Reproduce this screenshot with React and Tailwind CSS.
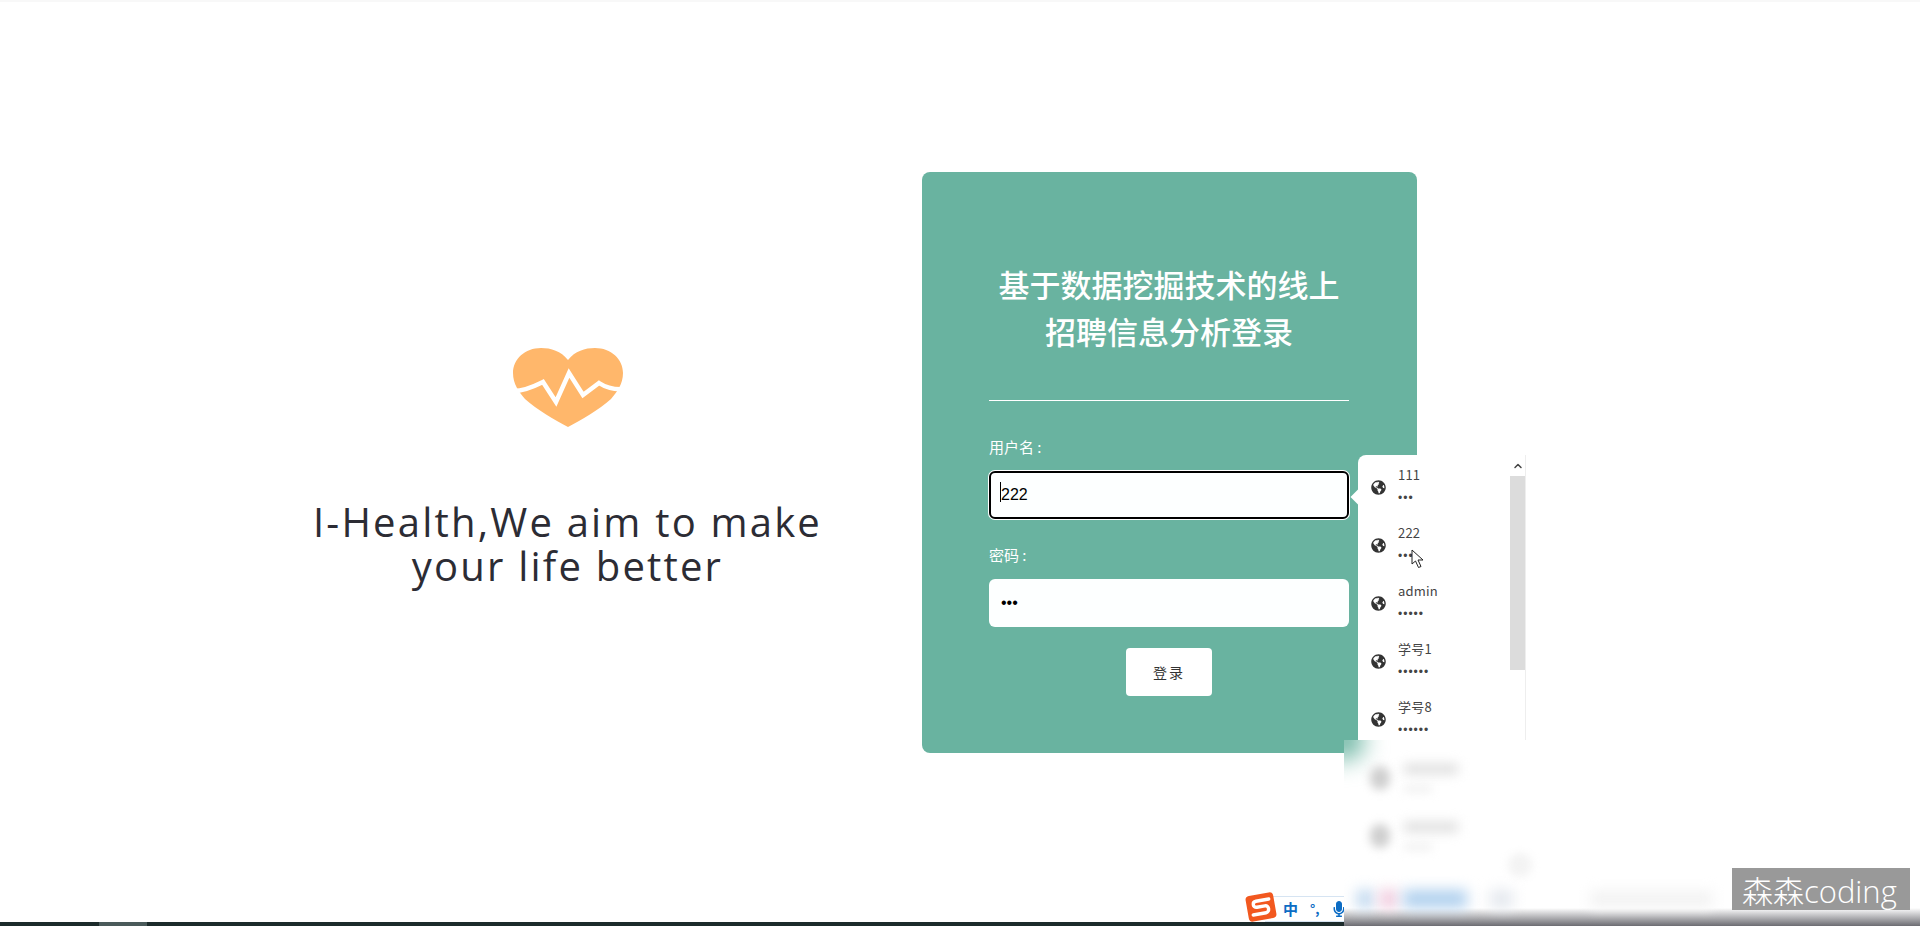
import { FaGlobeAmericas, FaMicrophone } from "react-icons/fa";
import { ChevronUp } from "lucide-react";

const saved = [
  { name: "111", dots: "•••" },
  { name: "222", dots: "•••" },
  { name: "admin", dots: "•••••" },
  { name: "学号1", dots: "••••••" },
  { name: "学号8", dots: "••••••" },
];

function Heart() {
  return (
    <svg width="110" height="79" viewBox="0 0 110 79" className="block">
      <path
        d="M55 12C48 3 38 0 28 0C12 0 0 11 0 25C0 36 6 44 12 51C24 62 42 72 55 79C68 72 86 62 98 51C104 44 110 36 110 25C110 11 98 0 82 0C72 0 62 3 55 12Z"
        fill="#ffb76b"
      />
      <path
        d="M-2 43C8 44 18 40 30 34L43 54L56 25L70 47L86 35C92 39 100 42 112 41"
        fill="none"
        stroke="#fff"
        strokeWidth="4.5"
      />
    </svg>
  );
}

function SogouLogo() {
  return (
    <svg width="34" height="32" viewBox="0 0 34 32">
      <g transform="rotate(-10 17 16)">
        <rect x="3" y="3" width="28" height="26" rx="4" fill="#f2581f" />
        <path
          d="M26 9.5H13C9 9.5 8.5 15.5 13 15.5H21C25.5 15.5 25 22.5 21 22.5H8"
          fill="none"
          stroke="#fff"
          strokeWidth="3.4"
          strokeLinecap="round"
        />
      </g>
    </svg>
  );
}

// the two rows the recording blurred out
function BlurredRow() {
  return (
    <div className="h-[58px] flex items-center gap-[14px] pl-[26px]">
      <div className="w-5 h-6 rounded-full bg-[#cfcfcf] blur-[5px]" />
      <div className="flex flex-col gap-3">
        <div className="w-[54px] h-2.5 bg-[#dddddd] blur-[6px]" />
        <div className="w-7 h-1.5 bg-[#eeeeee] blur-[5px]" />
      </div>
    </div>
  );
}

export default function App() {
  return (
    <div className="relative h-[926px] overflow-hidden bg-white border-t-2 border-[#f8f8f8] font-['Noto_Sans_CJK_SC',sans-serif]">
      {/* Page */}
      <div className="flex items-start pl-[315px] pt-[170px]">
        <div className="w-[505px] pt-[176px] flex flex-col items-center">
          <Heart />
          <p className="mt-[73px] text-center text-[40px] leading-[44px] tracking-[2.2px] text-[#2c2c34] font-['Open_Sans',sans-serif] whitespace-nowrap">
            I-Health,We aim to make
            <br />
            your life better
          </p>
        </div>

        <div className="ml-[102px] w-[495px] h-[581px] rounded-lg bg-[#69b3a0] pl-[67px] pr-[68px] pt-[88px]">
          <h1 className="text-center text-[31px] leading-[47px] font-medium text-white">
            基于数据挖掘技术的线上
            <br />
            招聘信息分析登录
          </h1>
          <div className="mt-[46px] h-px bg-white" />

          <label className="mt-9 block text-[15px] leading-5 text-white">用户名 :</label>
          <input
            defaultValue="222"
            className="mt-3.5 block w-full h-12 rounded-md bg-[#fdffff] px-[10px] text-base text-black font-['Liberation_Sans',sans-serif] border-2 border-black outline-none ring-1 ring-white"
          />

          <label className="mt-[26px] block text-[15px] leading-5 text-white">密码 :</label>
          <input
            type="password"
            defaultValue="123"
            className="mt-3.5 block w-full h-12 rounded-md bg-[#fdffff] px-3 text-base text-black font-['Liberation_Sans',sans-serif] outline-none"
          />

          <div className="mt-[21px] flex justify-center">
            <button className="w-[86px] h-12 rounded bg-white text-sm tracking-[2px] text-[#333]">登录</button>
          </div>
        </div>
      </div>

      {/* Saved password popup */}
      <div className="absolute left-[1358px] top-[453px] w-[168px] h-[285px] rounded-tl-lg bg-white flex">
        <span className="absolute -left-[5px] top-[36px] w-3 h-3 rotate-45 bg-white" />
        <span className="absolute left-[-358px] top-[27px] h-5 w-px bg-black" />
        <div className="flex-1 pt-[3px]">
          {saved.map((item) => (
            <div key={item.name} className="h-[58px] flex items-center gap-3 pl-[13px]">
              <FaGlobeAmericas className="w-[15px] h-[15px] text-[#333]" />
              <div className="text-[13px] text-[#444]">
                <div className="leading-[22px] tracking-[0.2px]">{item.name}</div>
                <div className="leading-[24px] text-[12px] tracking-[1px] font-['Liberation_Sans',sans-serif]">{item.dots}</div>
              </div>
            </div>
          ))}
        </div>
        <div className="w-4 flex flex-col items-center border-r border-[#eeeeee]">
          <ChevronUp className="mt-[5px] w-3 h-3 text-[#444]" strokeWidth={3} />
          <div className="mt-1 w-full h-[194px] bg-[#dcdcdc]" />
        </div>
      </div>

      {/* Cursor */}
      <svg width="14" height="20" viewBox="0 0 14 20" className="absolute left-[1411px] top-[547px]">
        <path d="M1 1V15L4.5 12L7.5 18.5L10 17.5L7 11H12Z" fill="#fff" stroke="#222" strokeWidth="1" />
      </svg>

      {/* Blurred bottom patch of the recording */}
      <div className="absolute left-[1344px] top-[738px] right-0 bottom-0 overflow-hidden bg-white flex flex-col pt-[9px]">
        <div className="absolute -left-5 -top-5 w-10 h-10 rounded-full bg-[#69b3a0] blur-md" />
        <BlurredRow />
        <BlurredRow />
        <div className="-mt-3 ml-[164px] w-6 h-6 rounded-full bg-[#f3f3f3] blur-[4px]" />
        <div className="mt-[13px] h-[18px] flex pl-[13px]">
          <div className="w-4 bg-[#bcd6ee] blur-[7px]" />
          <div className="ml-[7px] w-[17px] bg-[#f0c8dc] blur-[7px]" />
          <div className="ml-1.5 w-16 bg-[#b0d0ee] blur-[7px]" />
          <div className="ml-[23px] w-[23px] bg-[#e4e8ee] blur-[7px]" />
          <div className="ml-[77px] w-[123px] bg-[#f4f4f4] blur-[6px]" />
        </div>
        <div className="h-[18px] bg-gradient-to-b from-white/0 to-[#6c6c72]" />
      </div>

      {/* IME toolbar */}
      <div className="absolute left-[1265px] top-[894px] w-[79px] h-[26px] flex items-center gap-3 pl-[18px] bg-white border-y border-[#d6e4f2] overflow-hidden">
        <span className="text-[15px] font-bold text-[#0c6cc4]">中</span>
        <span className="text-[13px] font-bold text-[#0c6cc4]">°,</span>
        <FaMicrophone className="w-[14px] h-[16px] shrink-0 text-[#0c6cc4]" />
      </div>
      <div className="absolute left-[1244px] top-[889px]">
        <SogouLogo />
      </div>

      {/* Taskbar sliver */}
      <div className="absolute left-0 bottom-0 w-[1344px] h-1 flex bg-[#1c2b2b]">
        <div className="ml-[99px] w-12 bg-[#4a5a5a]" />
      </div>

      {/* Watermark */}
      <div className="absolute left-[1732px] top-[866px] w-[178px] h-[42px] bg-[#999999] pl-[10px] text-[31px] leading-[46px] text-white font-light font-['Open_Sans','Noto_Sans_CJK_SC',sans-serif] whitespace-nowrap">
        森森coding
      </div>
    </div>
  );
}
